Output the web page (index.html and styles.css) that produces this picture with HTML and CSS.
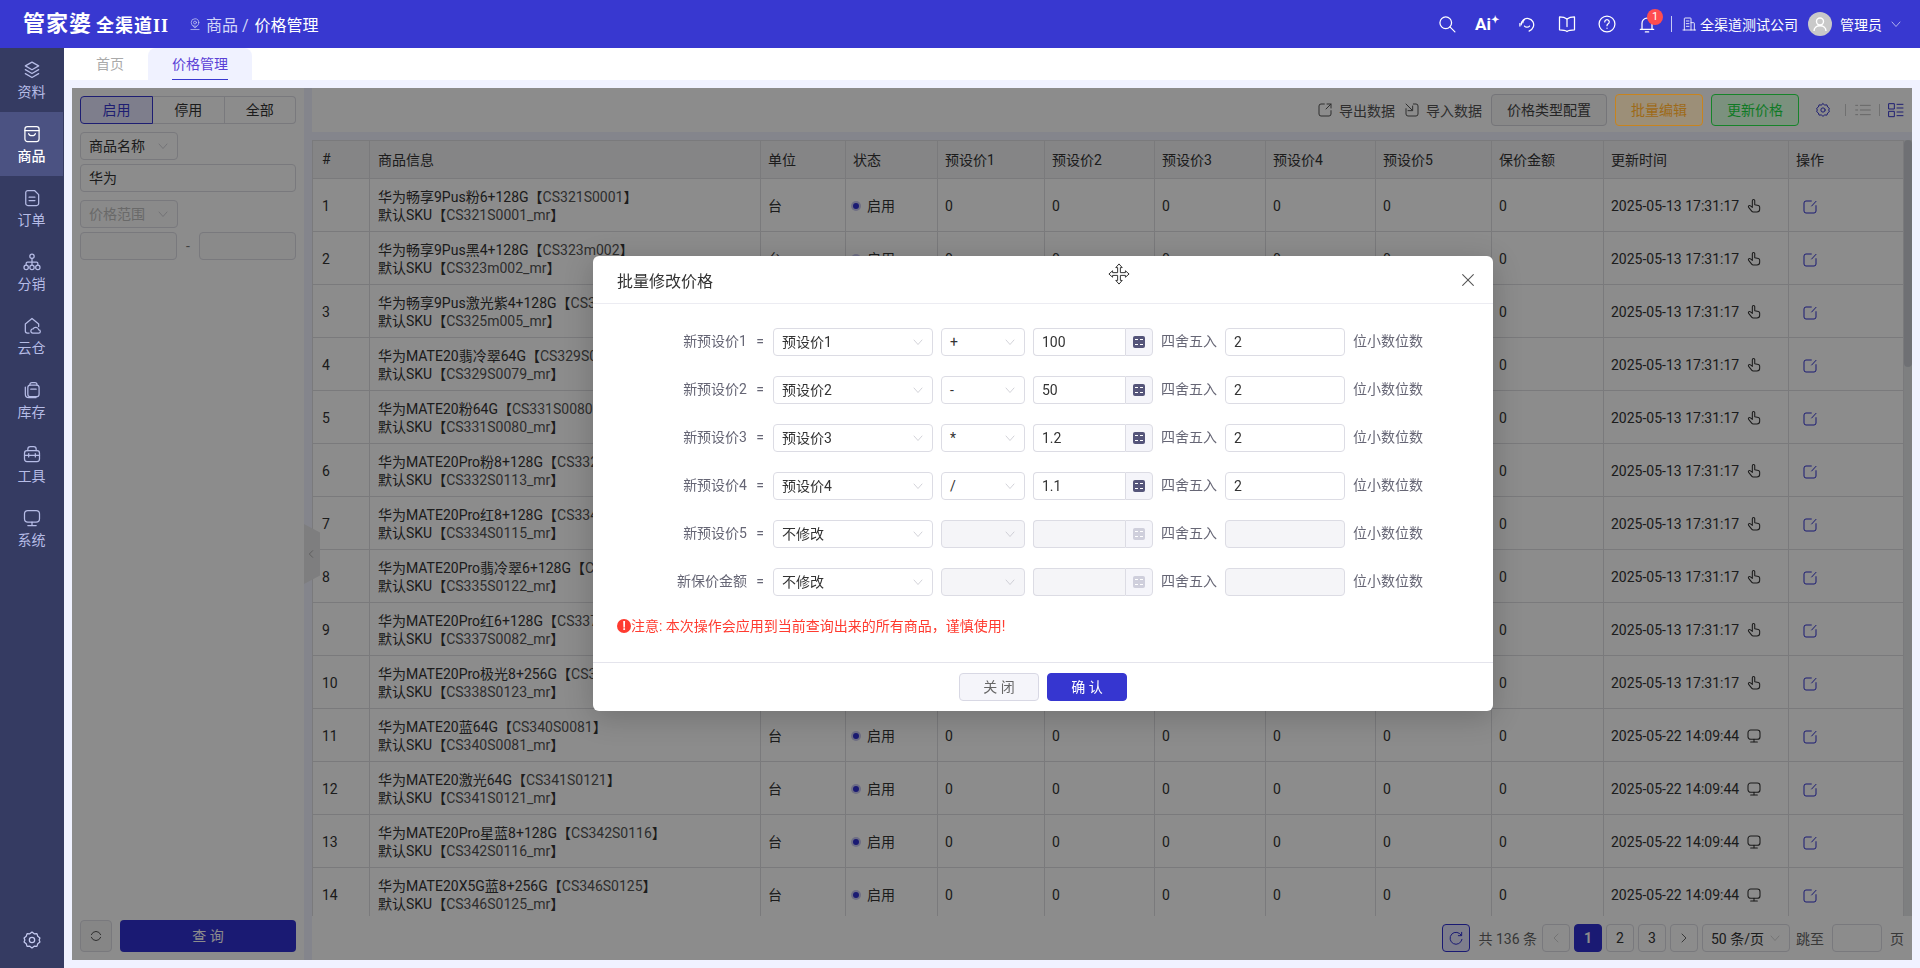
FILE: index.html
```html
<!DOCTYPE html>
<html lang="zh-CN">

<head>
    <meta charset="UTF-8">
    <title>价格管理</title>
    <link rel="stylesheet" href="styles.css">
</head>

<body>
    <svg class="sprite" xmlns="http://www.w3.org/2000/svg">
        <symbol id="i-layers" viewBox="0 0 24 24"><path d="M12 2.500l8 4.600-8 4.600-8-4.600z"/><path d="M4 11.600l8 4.600 8-4.600"/><path d="M4 16.400l8 4.600 8-4.600"/></symbol>
        <symbol id="i-shop" viewBox="0 0 24 24"><rect x="3.500" y="3" width="17" height="18" rx="3"/><path d="M3.500 8h17"/><path d="M8 11.500c.8 3.400 7.200 3.400 8 0"/></symbol>
        <symbol id="i-doc" viewBox="0 0 24 24"><path d="M7 3h8l5 5v10.500a2.500 2.500 0 0 1-2.500 2.500h-10.500a2.500 2.500 0 0 1-2.500-2.500v-13a2.500 2.500 0 0 1 2.500-2.500z"/><path d="M8.500 11h7"/><path d="M8.500 15h7"/></symbol>
        <symbol id="i-org" viewBox="0 0 24 24"><circle cx="12" cy="5" r="2.600"/><circle cx="5" cy="18.500" r="2.600"/><circle cx="12" cy="18.500" r="2.600"/><circle cx="19" cy="18.500" r="2.600"/><path d="M12 7.600v8.300"/><path d="M5 15.900v-2.400a1.500 1.500 0 0 1 1.500-1.500h11a1.500 1.500 0 0 1 1.500 1.500v2.400"/></symbol>
        <symbol id="i-cloud" viewBox="0 0 24 24"><path d="M8.500 20.500h-2a2.500 2.500 0 0 1-2.500-2.500v-8.500l8-6.500 8 6.500v3"/><path d="M13 20.500a2.500 2.500 0 0 1 .3-5 3.600 3.600 0 0 1 6.700 1 2 2 0 0 1 0 4z"/></symbol>
        <symbol id="i-jar" viewBox="0 0 24 24"><rect x="7" y="6" width="13.500" height="14" rx="3"/><path d="M4 8.500v8.500a4 4 0 0 0 4 4h9"/><path d="M10.500 11h6.500"/><path d="M9.500 6v-.5a2.500 2.500 0 0 1 2.500-2.500h3.500a2.500 2.500 0 0 1 2.500 2.500v.5"/></symbol>
        <symbol id="i-box" viewBox="0 0 24 24"><rect x="3" y="8" width="18" height="13" rx="3"/><path d="M7 8v-2a3 3 0 0 1 3-3h4a3 3 0 0 1 3 3v2"/><path d="M3 13.500h18"/><path d="M8 11.500v4"/><path d="M16 11.500v4"/></symbol>
        <symbol id="i-monitor" viewBox="0 0 24 24"><rect x="3" y="3" width="18" height="14" rx="4"/><path d="M12 17v3.500"/><path d="M7 21h10"/></symbol>
        <symbol id="i-gear" viewBox="0 0 24 24"><path d="M12 2.500l2.600 2.100 3.300-.3 1 3.200 2.600 2-.9 2.500.9 2.500-2.600 2-1 3.200-3.300-.3-2.600 2.100-2.600-2.100-3.300.3-1-3.200-2.600-2 .9-2.500-.9-2.500 2.600-2 1-3.200 3.300.3z"/><circle cx="12" cy="12" r="3.200"/></symbol>
        <symbol id="i-search" viewBox="0 0 24 24"><circle cx="10.500" cy="10.500" r="7"/><path d="M15.500 15.500l6 6"/></symbol>
        <symbol id="i-headset" viewBox="0 0 24 24"><path d="M5 13a7.500 7.500 0 1 1 14.500 2.500c-.8 2-2.500 4-5 5"/><path d="M3.500 11.500v3"/><path d="M9 14.500c1.500 1.700 4.500 1.700 6 0"/><path d="M9 6.500c-1.500 1-2 2.500-2 4"/></symbol>
        <symbol id="i-book" viewBox="0 0 24 24"><path d="M12 6c-2-1.600-5-2.500-9-2.500v15.500c4 0 7 .5 9 2 2-1.500 5-2 9-2v-15.500c-4 0-7 .9-9 2.500z"/><path d="M12 6v9"/></symbol>
        <symbol id="i-help" viewBox="0 0 24 24"><circle cx="12" cy="12" r="9.500"/><path d="M9.300 9.500a2.700 2.700 0 1 1 4.100 2.300c-.9.6-1.400 1.100-1.400 2.200"/><path d="M12 17v.2"/></symbol>
        <symbol id="i-bell" viewBox="0 0 24 24"><path d="M6 18.500v-7.500a6 6 0 0 1 12 0v7.500"/><path d="M4 18.500h16"/><path d="M10 21.500h4"/></symbol>
        <symbol id="i-building" viewBox="0 0 24 24"><path d="M5 21v-17a1 1 0 0 1 1-1h8a1 1 0 0 1 1 1v17"/><path d="M15 10h4a1 1 0 0 1 1 1v10"/><path d="M3 21h19"/><path d="M8 7.500h4"/><path d="M8 11.500h4"/><path d="M8 15.500h4"/></symbol>
        <symbol id="i-pin" viewBox="0 0 24 24"><circle cx="12" cy="9.500" r="6.500"/><circle cx="12" cy="9.500" r="2.500"/><path d="M9 16l3 3 3-3"/><path d="M5 21.500h14"/></symbol>
        <symbol id="i-export" viewBox="0 0 24 24"><path d="M11 3h-5a3 3 0 0 0-3 3v12a3 3 0 0 0 3 3h12a3 3 0 0 0 3-3v-5"/><path d="M15 3h6v6"/><path d="M21 3l-7.500 7.500"/></symbol>
        <symbol id="i-import" viewBox="0 0 24 24"><path d="M3 10v8a3 3 0 0 0 3 3h12a3 3 0 0 0 3-3v-12a3 3 0 0 0-3-3h-4"/><path d="M3 3l9 9"/><path d="M13 6v7h-7"/></symbol>
        <symbol id="i-edit" viewBox="0 0 24 24"><path d="M14 3h-8a3 3 0 0 0-3 3v12a3 3 0 0 0 3 3h12a3 3 0 0 0 3-3v-8"/><path d="M21 3.500l-6.500 7"/></symbol>
        <symbol id="i-hand" viewBox="0 0 24 24"><path d="M9.500 14v-10a1.800 1.800 0 0 1 3.600 0v6l5.400 1.200c1.200.3 2 1.200 2 2.400v3.400a4 4 0 0 1-4 4h-5.500a3 3 0 0 1-2.500-1.300l-4.500-5.700c-.7-1-.4-2 .4-2.500.8-.5 1.700-.3 2.300.4z"/></symbol>
        <symbol id="i-list" viewBox="0 0 24 24"><path d="M8 5h15"/><path d="M8 12h15"/><path d="M8 19h15"/><path d="M1 5h3"/><path d="M1 12h3"/><path d="M1 19h3"/></symbol>
        <symbol id="i-grid" viewBox="0 0 24 24"><rect x="1.500" y="2.500" width="8" height="8"/><rect x="1.500" y="14" width="8" height="8"/><path d="M13.500 3.500h9"/><path d="M13.500 9h9"/><path d="M13.500 15h9"/><path d="M13.500 20.500h9"/></symbol>
        <symbol id="i-down" viewBox="0 0 24 24"><path d="M4 8l8 9 8-9"/></symbol>
        <symbol id="i-left" viewBox="0 0 24 24"><path d="M16 4l-8 8 8 8"/></symbol>
        <symbol id="i-right" viewBox="0 0 24 24"><path d="M8 4l8 8-8 8"/></symbol>
        <symbol id="i-close" viewBox="0 0 24 24"><path d="M4 4l16 16"/><path d="M20 4l-16 16"/></symbol>
        <symbol id="i-refresh" viewBox="0 0 24 24"><path d="M20 8a9 9 0 1 0 1 6"/><path d="M20.500 3.500v5h-5"/></symbol>
        <symbol id="i-sync" viewBox="0 0 24 24"><path d="M5 10a7.500 7.500 0 0 1 14 0"/><path d="M19 14a7.500 7.500 0 0 1-14 0"/></symbol>
    </svg>

    <header class="topbar">
        <div class="logo"><span class="logo-main">管家婆</span><span class="logo-sub">全渠道<i>II</i></span></div>
        <div class="crumb">
            <svg class="ico crumb-ico"><use href="#i-pin"/></svg>
            <span class="crumb-parent">商品 /</span>
            <span class="crumb-current">价格管理</span>
        </div>
        <div class="top-actions">
            <span class="top-btn"><svg class="ico"><use href="#i-search"/></svg></span>
            <span class="top-btn ai">Ai<b>✦</b></span>
            <span class="top-btn"><svg class="ico"><use href="#i-headset"/></svg></span>
            <span class="top-btn"><svg class="ico"><use href="#i-book"/></svg></span>
            <span class="top-btn"><svg class="ico"><use href="#i-help"/></svg></span>
            <span class="top-btn bell"><svg class="ico"><use href="#i-bell"/></svg><em class="badge">1</em></span>
            <span class="top-sep"></span>
            <svg class="ico company-ico"><use href="#i-building"/></svg>
            <span class="company">全渠道测试公司</span>
            <span class="avatar"><svg viewBox="0 0 24 24"><circle cx="12" cy="9.500" r="3.500"/><path d="M6 19c0-7 12-7 12 0"/></svg></span>
            <span class="user">管理员</span>
            <svg class="ico user-down"><use href="#i-down"/></svg>
        </div>
    </header>

    <div class="shell">
        <nav class="sidenav">
            <a class="nav-item"><svg class="ico"><use href="#i-layers"/></svg>资料</a>
            <a class="nav-item active"><svg class="ico"><use href="#i-shop"/></svg>商品</a>
            <a class="nav-item"><svg class="ico"><use href="#i-doc"/></svg>订单</a>
            <a class="nav-item"><svg class="ico"><use href="#i-org"/></svg>分销</a>
            <a class="nav-item"><svg class="ico"><use href="#i-cloud"/></svg>云仓</a>
            <a class="nav-item"><svg class="ico"><use href="#i-jar"/></svg>库存</a>
            <a class="nav-item"><svg class="ico"><use href="#i-box"/></svg>工具</a>
            <a class="nav-item"><svg class="ico"><use href="#i-monitor"/></svg>系统</a>
            <svg class="ico nav-gear"><use href="#i-gear"/></svg>
        </nav>

        <main class="main">
            <div class="tabs">
                <span class="tab">首页</span>
                <span class="tab active"><span>价格管理</span></span>
            </div>

            <div class="content">
                <aside class="filter">
                    <div class="seg">
                        <span class="seg-item active">启用</span>
                        <span class="seg-item">停用</span>
                        <span class="seg-item">全部</span>
                    </div>
                    <div class="field sel narrow">商品名称<svg class="ico chev"><use href="#i-down"/></svg></div>
                    <div class="field">华为</div>
                    <div class="field sel narrow disabled">价格范围<svg class="ico chev"><use href="#i-down"/></svg></div>
                    <div class="range">
                        <div class="field disabled"></div>
                        <span>-</span>
                        <div class="field disabled"></div>
                    </div>
                    <div class="filter-foot">
                        <span class="sync"><svg class="ico"><use href="#i-sync"/></svg></span>
                        <span class="query">查 询</span>
                    </div>
                </aside>

                <section class="right">
                    <div class="toolbar">
                        <span class="tool-link"><svg class="ico"><use href="#i-export"/></svg>导出数据</span>
                        <span class="tool-link"><svg class="ico"><use href="#i-import"/></svg>导入数据</span>
                        <span class="btn">价格类型配置</span>
                        <span class="btn orange">批量编辑</span>
                        <span class="btn green">更新价格</span>
                        <svg class="ico tool-gear"><use href="#i-gear"/></svg>
                        <span class="tool-sep"></span>
                        <svg class="ico tool-list"><use href="#i-list"/></svg>
                        <span class="tool-sep"></span>
                        <svg class="ico tool-grid"><use href="#i-grid"/></svg>
                    </div>

                    <div class="grid-panel">
                        <div class="grid-body">
                            <div class="grid-scroll">
                                <table class="grid">
                                    <colgroup>
                                        <col class="c-no"><col class="c-info"><col class="c-unit"><col class="c-state">
                                        <col class="c-p1"><col class="c-p2"><col class="c-p3"><col class="c-p4"><col class="c-p5">
                                        <col class="c-keep"><col class="c-time"><col class="c-op">
                                    </colgroup>
                                    <thead>
                                        <tr><th>#</th><th>商品信息</th><th>单位</th><th>状态</th><th>预设价1</th><th>预设价2</th><th>预设价3</th><th>预设价4</th><th>预设价5</th><th>保价金额</th><th>更新时间</th><th>操作</th></tr>
                                    </thead>
                                    <tbody>
                                        <tr><td>1</td><td>华为畅享9Pus粉6+128G【<i>CS321S0001</i>】<br>默认SKU【<i>CS321S0001_mr</i>】</td><td>台</td><td><span class="dot"></span>启用</td><td>0</td><td>0</td><td>0</td><td>0</td><td>0</td><td>0</td><td>2025-05-13 17:31:17<svg class="ico src"><use href="#i-hand"/></svg></td><td><svg class="ico edit"><use href="#i-edit"/></svg></td></tr>
                                        <tr><td>2</td><td>华为畅享9Pus黑4+128G【<i>CS323m002</i>】<br>默认SKU【<i>CS323m002_mr</i>】</td><td>台</td><td><span class="dot"></span>启用</td><td>0</td><td>0</td><td>0</td><td>0</td><td>0</td><td>0</td><td>2025-05-13 17:31:17<svg class="ico src"><use href="#i-hand"/></svg></td><td><svg class="ico edit"><use href="#i-edit"/></svg></td></tr>
                                        <tr><td>3</td><td>华为畅享9Pus激光紫4+128G【<i>CS325m005</i>】<br>默认SKU【<i>CS325m005_mr</i>】</td><td>台</td><td><span class="dot"></span>启用</td><td>0</td><td>0</td><td>0</td><td>0</td><td>0</td><td>0</td><td>2025-05-13 17:31:17<svg class="ico src"><use href="#i-hand"/></svg></td><td><svg class="ico edit"><use href="#i-edit"/></svg></td></tr>
                                        <tr><td>4</td><td>华为MATE20翡冷翠64G【<i>CS329S0079</i>】<br>默认SKU【<i>CS329S0079_mr</i>】</td><td>台</td><td><span class="dot"></span>启用</td><td>0</td><td>0</td><td>0</td><td>0</td><td>0</td><td>0</td><td>2025-05-13 17:31:17<svg class="ico src"><use href="#i-hand"/></svg></td><td><svg class="ico edit"><use href="#i-edit"/></svg></td></tr>
                                        <tr><td>5</td><td>华为MATE20粉64G【<i>CS331S0080</i>】<br>默认SKU【<i>CS331S0080_mr</i>】</td><td>台</td><td><span class="dot"></span>启用</td><td>0</td><td>0</td><td>0</td><td>0</td><td>0</td><td>0</td><td>2025-05-13 17:31:17<svg class="ico src"><use href="#i-hand"/></svg></td><td><svg class="ico edit"><use href="#i-edit"/></svg></td></tr>
                                        <tr><td>6</td><td>华为MATE20Pro粉8+128G【<i>CS332S0113</i>】<br>默认SKU【<i>CS332S0113_mr</i>】</td><td>台</td><td><span class="dot"></span>启用</td><td>0</td><td>0</td><td>0</td><td>0</td><td>0</td><td>0</td><td>2025-05-13 17:31:17<svg class="ico src"><use href="#i-hand"/></svg></td><td><svg class="ico edit"><use href="#i-edit"/></svg></td></tr>
                                        <tr><td>7</td><td>华为MATE20Pro红8+128G【<i>CS334S0115</i>】<br>默认SKU【<i>CS334S0115_mr</i>】</td><td>台</td><td><span class="dot"></span>启用</td><td>0</td><td>0</td><td>0</td><td>0</td><td>0</td><td>0</td><td>2025-05-13 17:31:17<svg class="ico src"><use href="#i-hand"/></svg></td><td><svg class="ico edit"><use href="#i-edit"/></svg></td></tr>
                                        <tr><td>8</td><td>华为MATE20Pro翡冷翠6+128G【<i>CS335S0122</i>】<br>默认SKU【<i>CS335S0122_mr</i>】</td><td>台</td><td><span class="dot"></span>启用</td><td>0</td><td>0</td><td>0</td><td>0</td><td>0</td><td>0</td><td>2025-05-13 17:31:17<svg class="ico src"><use href="#i-hand"/></svg></td><td><svg class="ico edit"><use href="#i-edit"/></svg></td></tr>
                                        <tr><td>9</td><td>华为MATE20Pro红6+128G【<i>CS337S0082</i>】<br>默认SKU【<i>CS337S0082_mr</i>】</td><td>台</td><td><span class="dot"></span>启用</td><td>0</td><td>0</td><td>0</td><td>0</td><td>0</td><td>0</td><td>2025-05-13 17:31:17<svg class="ico src"><use href="#i-hand"/></svg></td><td><svg class="ico edit"><use href="#i-edit"/></svg></td></tr>
                                        <tr><td>10</td><td>华为MATE20Pro极光8+256G【<i>CS338S0123</i>】<br>默认SKU【<i>CS338S0123_mr</i>】</td><td>台</td><td><span class="dot"></span>启用</td><td>0</td><td>0</td><td>0</td><td>0</td><td>0</td><td>0</td><td>2025-05-13 17:31:17<svg class="ico src"><use href="#i-hand"/></svg></td><td><svg class="ico edit"><use href="#i-edit"/></svg></td></tr>
                                        <tr><td>11</td><td>华为MATE20蓝64G【<i>CS340S0081</i>】<br>默认SKU【<i>CS340S0081_mr</i>】</td><td>台</td><td><span class="dot"></span>启用</td><td>0</td><td>0</td><td>0</td><td>0</td><td>0</td><td>0</td><td>2025-05-22 14:09:44<svg class="ico src"><use href="#i-monitor"/></svg></td><td><svg class="ico edit"><use href="#i-edit"/></svg></td></tr>
                                        <tr><td>12</td><td>华为MATE20激光64G【<i>CS341S0121</i>】<br>默认SKU【<i>CS341S0121_mr</i>】</td><td>台</td><td><span class="dot"></span>启用</td><td>0</td><td>0</td><td>0</td><td>0</td><td>0</td><td>0</td><td>2025-05-22 14:09:44<svg class="ico src"><use href="#i-monitor"/></svg></td><td><svg class="ico edit"><use href="#i-edit"/></svg></td></tr>
                                        <tr><td>13</td><td>华为MATE20Pro星蓝8+128G【<i>CS342S0116</i>】<br>默认SKU【<i>CS342S0116_mr</i>】</td><td>台</td><td><span class="dot"></span>启用</td><td>0</td><td>0</td><td>0</td><td>0</td><td>0</td><td>0</td><td>2025-05-22 14:09:44<svg class="ico src"><use href="#i-monitor"/></svg></td><td><svg class="ico edit"><use href="#i-edit"/></svg></td></tr>
                                        <tr><td>14</td><td>华为MATE20X5G蓝8+256G【<i>CS346S0125</i>】<br>默认SKU【<i>CS346S0125_mr</i>】</td><td>台</td><td><span class="dot"></span>启用</td><td>0</td><td>0</td><td>0</td><td>0</td><td>0</td><td>0</td><td>2025-05-22 14:09:44<svg class="ico src"><use href="#i-monitor"/></svg></td><td><svg class="ico edit"><use href="#i-edit"/></svg></td></tr>
                                    </tbody>
                                </table>
                            </div>
                            <div class="scrollbar"><span></span></div>
                        </div>

                        <div class="pager">
                            <span class="pg-refresh"><svg class="ico"><use href="#i-refresh"/></svg></span>
                            <span class="pg-total">共 136 条</span>
                            <span class="pg-btn off"><svg class="ico"><use href="#i-left"/></svg></span>
                            <span class="pg-btn current">1</span>
                            <span class="pg-btn">2</span>
                            <span class="pg-btn">3</span>
                            <span class="pg-btn"><svg class="ico"><use href="#i-right"/></svg></span>
                            <span class="pg-size">50 条/页<svg class="ico"><use href="#i-down"/></svg></span>
                            <span class="pg-label jump">跳至</span>
                            <span class="pg-input"></span>
                            <span class="pg-label last">页</span>
                        </div>
                    </div>
                </section>

                <div class="collapse"><svg class="ico"><use href="#i-left"/></svg></div>
                <div class="mask"></div>
            </div>
        </main>
    </div>

    <div class="modal">
        <div class="modal-head">
            <span>批量修改价格</span>
            <svg class="ico modal-close"><use href="#i-close"/></svg>
        </div>
        <div class="modal-body">
            <div class="row">
                <label class="row-label">新预设价1</label><span class="eq">=</span>
                <div class="field sel base">预设价1<svg class="ico chev"><use href="#i-down"/></svg></div>
                <div class="field sel op">+<svg class="ico chev"><use href="#i-down"/></svg></div>
                <div class="calc"><div class="field">100</div><span class="calc-btn"><span class="calc-ico"></span></span></div>
                <span class="round">四舍五入</span>
                <div class="field digits">2</div>
                <span class="unit">位小数位数</span>
            </div>
            <div class="row">
                <label class="row-label">新预设价2</label><span class="eq">=</span>
                <div class="field sel base">预设价2<svg class="ico chev"><use href="#i-down"/></svg></div>
                <div class="field sel op">-<svg class="ico chev"><use href="#i-down"/></svg></div>
                <div class="calc"><div class="field">50</div><span class="calc-btn"><span class="calc-ico"></span></span></div>
                <span class="round">四舍五入</span>
                <div class="field digits">2</div>
                <span class="unit">位小数位数</span>
            </div>
            <div class="row">
                <label class="row-label">新预设价3</label><span class="eq">=</span>
                <div class="field sel base">预设价3<svg class="ico chev"><use href="#i-down"/></svg></div>
                <div class="field sel op">*<svg class="ico chev"><use href="#i-down"/></svg></div>
                <div class="calc"><div class="field">1.2</div><span class="calc-btn"><span class="calc-ico"></span></span></div>
                <span class="round">四舍五入</span>
                <div class="field digits">2</div>
                <span class="unit">位小数位数</span>
            </div>
            <div class="row">
                <label class="row-label">新预设价4</label><span class="eq">=</span>
                <div class="field sel base">预设价4<svg class="ico chev"><use href="#i-down"/></svg></div>
                <div class="field sel op">/<svg class="ico chev"><use href="#i-down"/></svg></div>
                <div class="calc"><div class="field">1.1</div><span class="calc-btn"><span class="calc-ico"></span></span></div>
                <span class="round">四舍五入</span>
                <div class="field digits">2</div>
                <span class="unit">位小数位数</span>
            </div>
            <div class="row">
                <label class="row-label">新预设价5</label><span class="eq">=</span>
                <div class="field sel base">不修改<svg class="ico chev"><use href="#i-down"/></svg></div>
                <div class="field sel op locked"><svg class="ico chev"><use href="#i-down"/></svg></div>
                <div class="calc locked"><div class="field"></div><span class="calc-btn"><span class="calc-ico"></span></span></div>
                <span class="round">四舍五入</span>
                <div class="field digits locked"></div>
                <span class="unit">位小数位数</span>
            </div>
            <div class="row">
                <label class="row-label">新保价金额</label><span class="eq">=</span>
                <div class="field sel base">不修改<svg class="ico chev"><use href="#i-down"/></svg></div>
                <div class="field sel op locked"><svg class="ico chev"><use href="#i-down"/></svg></div>
                <div class="calc locked"><div class="field"></div><span class="calc-btn"><span class="calc-ico"></span></span></div>
                <span class="round">四舍五入</span>
                <div class="field digits locked"></div>
                <span class="unit">位小数位数</span>
            </div>
            <p class="warn"><span class="warn-ico">!</span>注意: 本次操作会应用到当前查询出来的所有商品，谨慎使用!</p>
        </div>
        <div class="modal-foot">
            <span class="foot-btn">关 闭</span>
            <span class="foot-btn primary">确 认</span>
        </div>
        <svg class="move-cursor" viewBox="0 0 24 24"><path d="M12 1l3.500 4h-2v5.500h5.500v-2l4 3.500-4 3.500v-2h-5.500v5.500h2l-3.500 4-3.500-4h2v-5.500h-5.500v2l-4-3.500 4-3.500v2h5.500v-5.500h-2z"/></svg>
    </div>
</body>

</html>
```
FILE: styles.css
```css
* {
    box-sizing: border-box;
}

html,
body {
    height: 100%;
}

body {
    margin: 0;
    font-family: Roboto, "Noto Sans CJK SC", sans-serif;
    font-size: 14px;
    color: #333;
    background: #f0f2ff;
    overflow: hidden;
    display: flex;
    flex-direction: column;
}

.sprite {
    display: none;
}

.ico {
    width: 16px;
    height: 16px;
    fill: none;
    stroke: currentColor;
    stroke-width: 1.5;
    stroke-linecap: round;
    stroke-linejoin: round;
    flex: none;
}

/* top bar */
.topbar {
    height: 48px;
    flex: none;
    background: #3838d0;
    color: #fff;
    display: flex;
    align-items: center;
}

.logo {
    width: 188px;
    padding-left: 23px;
    font-weight: 700;
    white-space: nowrap;
    display: flex;
    align-items: center;
}

.logo-main {
    font-size: 22px;
    letter-spacing: 1px;
    margin-right: 4px;
    line-height: 28px;
}

.logo-sub {
    font-size: 18px;
    letter-spacing: 1px;
    line-height: 28px;
    margin-top: 3px;
}

.logo-sub i {
    font-family: "Liberation Serif", serif;
    font-style: normal;
}

.crumb {
    display: flex;
    align-items: center;
    font-size: 16px;
}

.crumb-ico {
    width: 14px;
    height: 14px;
    color: #c5c9f5;
    margin-right: 4px;
    stroke-width: 1.3;
}

.crumb-parent {
    color: #d3d6f8;
    margin-right: 6px;
}

.top-actions {
    margin-left: auto;
    padding-right: 18px;
    display: flex;
    align-items: center;
}

.top-btn {
    width: 40px;
    height: 24px;
    display: flex;
    align-items: center;
    justify-content: center;
    position: relative;
}

.top-btn .ico {
    width: 20px;
    height: 20px;
}

.ai {
    font-weight: 700;
    font-size: 17px;
}

.ai b {
    font-size: 10px;
    margin-top: -9px;
}

.badge {
    position: absolute;
    left: 20px;
    top: -3px;
    width: 16px;
    height: 16px;
    border-radius: 50%;
    background: #ff4d4f;
    font-size: 11px;
    font-style: normal;
    line-height: 16px;
    text-align: center;
}

.top-sep {
    width: 1px;
    height: 16px;
    background: #c5c9f5;
    margin: 0 7px 0 4px;
}

.company-ico {
    margin: 0 3px 0 2px;
    stroke-width: 1.3;
}

.company {
    white-space: nowrap;
}

.avatar {
    width: 24px;
    height: 24px;
    border-radius: 50%;
    background: #c9c9c9;
    margin: 0 8px 0 10px;
}

.avatar svg {
    display: block;
    fill: none;
    stroke: #fff;
    stroke-width: 1.4;
}

.user-down {
    width: 12px;
    height: 12px;
    margin-left: 8px;
    stroke-width: 1.2;
}

/* side nav */
.shell {
    flex: 1;
    display: flex;
    min-height: 0;
}

.sidenav {
    width: 64px;
    flex: none;
    background: #353b62;
    display: flex;
    flex-direction: column;
}

.nav-item {
    width: 63px;
    height: 64px;
    padding-top: 12px;
    display: flex;
    flex-direction: column;
    align-items: center;
    gap: 2px;
    color: #b6bce6;
    line-height: 20px;
}

.nav-item .ico {
    width: 20px;
    height: 20px;
}

.nav-item.active {
    background: #4b5282;
    color: #fff;
    font-weight: 500;
}

.nav-gear {
    margin: auto auto 18px;
    width: 20px;
    height: 20px;
    color: #c5caf0;
}

/* main */
.main {
    flex: 1;
    min-width: 0;
    display: flex;
    flex-direction: column;
}

.tabs {
    height: 32px;
    flex: none;
    background: #fff;
    padding-left: 8px;
    display: flex;
    margin-bottom: 8px;
}

.tab {
    padding: 0 24px;
    line-height: 32px;
    color: #aaa;
}

.tab.active {
    background: #f0f2ff;
    border-radius: 8px 8px 0 0;
    color: #5a3fd6;
}

.tab.active span {
    display: block;
    height: 32px;
    border-bottom: 1px solid #3838d0;
}

.content {
    flex: 1;
    min-height: 0;
    position: relative;
    margin: 0 8px 8px;
    display: flex;
    gap: 8px;
}

.mask {
    position: absolute;
    inset: 0;
    z-index: 10;
    background: rgba(0, 0, 0, 0.45);
}

/* filter */
.filter {
    width: 232px;
    flex: none;
    background: #fff;
    padding: 8px;
    display: flex;
    flex-direction: column;
    gap: 4px;
}

.seg {
    display: flex;
    height: 28px;
}

.seg-item {
    flex: 1;
    border: 1px solid #dcdce4;
    border-left: 0;
    text-align: center;
    line-height: 26px;
}

.seg-item:last-child {
    border-radius: 0 4px 4px 0;
}

.seg-item.active {
    flex: none;
    width: 73px;
    border: 1px solid #3838d0;
    border-radius: 4px 0 0 4px;
    background: #e6e6ff;
    color: #3838d0;
}

.field {
    height: 28px;
    flex: none;
    border: 1px solid #dcdce4;
    border-radius: 4px;
    padding: 0 8px;
    line-height: 26px;
    background: #fff;
    color: #333;
}

.sel {
    display: flex;
    align-items: center;
    white-space: nowrap;
}

.chev {
    width: 12px;
    height: 12px;
    margin-left: auto;
    color: #b5b5c0;
    stroke-width: 1.2;
}

.narrow {
    width: 98px;
}

.filter .sel.narrow {
    margin-top: 4px;
}

.filter .field.disabled {
    background: #fbfbfb;
    color: #c0c0c0;
}

.range {
    display: flex;
    align-items: center;
    gap: 9px;
    color: #777;
}

.range .field {
    flex: 1;
}

.filter-foot {
    margin-top: auto;
    display: flex;
    gap: 8px;
}

.sync {
    width: 32px;
    height: 32px;
    border: 1px solid #dcdce4;
    border-radius: 4px;
    background: #f5f5f5;
    color: #555;
    display: flex;
    align-items: center;
    justify-content: center;
}

.query {
    flex: 1;
    height: 32px;
    border-radius: 4px;
    background: #3030d2;
    color: #fff;
    text-align: center;
    line-height: 32px;
}

/* right side */
.right {
    flex: 1;
    min-width: 0;
    display: flex;
    flex-direction: column;
    gap: 8px;
}

.toolbar {
    height: 44px;
    flex: none;
    background: #fff;
    display: flex;
    align-items: center;
    justify-content: flex-end;
    padding-right: 8px;
}

.tool-link {
    display: flex;
    align-items: center;
    gap: 6px;
    margin-right: 9px;
    color: #555;
}

.btn {
    height: 32px;
    padding: 0 15px;
    border: 1px solid #d5d5dc;
    border-radius: 4px;
    background: #f7f7f7;
    line-height: 30px;
    margin-right: 8px;
    color: #444;
}

.btn.orange {
    position: relative;
    z-index: 11;
    border-color: #c8841e;
    background: #9c8f78;
    color: #9e6a18;
}

.btn.green {
    position: relative;
    z-index: 11;
    border-color: #16842a;
    background: #7b917e;
    color: #0f7a25;
}

.tool-gear {
    color: #3838d0;
    margin: 0 14px 0 8px;
}

.tool-sep {
    width: 1px;
    height: 12px;
    background: #ccc;
}

.tool-list {
    color: #bbb;
    margin: 0 8px 0 9px;
}

.tool-grid {
    color: #3838d0;
    margin-left: 8px;
}

.grid-panel {
    flex: 1;
    min-height: 0;
    background: #fff;
    display: flex;
    flex-direction: column;
}

.grid-body {
    flex: 1;
    min-height: 0;
    display: flex;
}

.grid-scroll {
    flex: 1;
    min-width: 0;
    overflow: hidden;
}

.scrollbar {
    width: 8px;
    flex: none;
    background: #e6e7ea;
}

.scrollbar span {
    display: block;
    height: 227px;
    border-radius: 4px;
    background: #cacdd4;
}

.grid {
    width: 1592px;
    table-layout: fixed;
    border-collapse: separate;
    border-spacing: 0;
}

.c-no { width: 58px; }
.c-info { width: 391px; }
.c-unit { width: 85px; }
.c-state { width: 92px; }
.c-p1 { width: 107px; }
.c-p2 { width: 110px; }
.c-p3 { width: 111px; }
.c-p4 { width: 110px; }
.c-p5 { width: 116px; }
.c-keep { width: 112px; }
.c-time { width: 185px; }
.c-op { width: 115px; }

.grid th,
.grid td {
    padding: 0 8px 0 7px;
    border-right: 1px solid #dedee2;
    border-bottom: 1px solid #dedee2;
    text-align: left;
    white-space: nowrap;
    overflow: hidden;
    font-weight: 400;
}

.grid th {
    height: 39px;
    padding-bottom: 2px;
    background: #f2f2f4;
    border-top: 1px solid #dedee2;
}

.grid td {
    height: 53px;
    padding-top: 1px;
    line-height: 18px;
}

.grid th:first-child,
.grid td:first-child {
    padding-left: 9px;
    border-left: 1px solid #dedee2;
}

.grid th:nth-child(2),
.grid td:nth-child(2) {
    padding-left: 8px;
}

.grid i {
    font-style: normal;
    color: #555;
}

.dot {
    display: inline-block;
    width: 6px;
    height: 6px;
    border-radius: 50%;
    background: #3030d2;
    box-shadow: 0 0 0 2px #c8c8f0;
    margin: 0 8px 1px 0;
    vertical-align: middle;
}

.src {
    margin-left: 7px;
    vertical-align: -3px;
    stroke-width: 1.6;
}

.edit {
    margin-left: 6px;
    vertical-align: middle;
    color: #3030d2;
}

.pager {
    height: 44px;
    flex: none;
    display: flex;
    align-items: center;
    justify-content: flex-end;
    padding: 0 8px;
    gap: 4px;
}

.pg-refresh {
    width: 28px;
    height: 28px;
    border: 1px solid #3030d2;
    border-radius: 4px;
    background: #e6e6ff;
    color: #3030d2;
    display: flex;
    align-items: center;
    justify-content: center;
    margin-right: 4px;
}

.pg-total {
    color: #666;
    margin-right: 1px;
    white-space: nowrap;
}

.pg-btn {
    width: 28px;
    height: 28px;
    border: 1px solid #dcdce4;
    border-radius: 4px;
    text-align: center;
    line-height: 26px;
    display: flex;
    align-items: center;
    justify-content: center;
}

.pg-btn .ico {
    width: 12px;
    height: 12px;
}

.pg-btn.off {
    color: #c5c5c5;
}

.pg-btn.current {
    border-color: #3030d2;
    background: #3030d2;
    color: #fff;
    font-weight: 700;
}

.pg-size {
    width: 88px;
    height: 28px;
    border: 1px solid #dcdce4;
    border-radius: 4px;
    padding: 0 8px;
    display: flex;
    align-items: center;
    justify-content: space-between;
    white-space: nowrap;
}

.pg-size .ico {
    width: 12px;
    height: 12px;
    color: #bbb;
    stroke-width: 1.2;
}

.pg-label {
    color: #666;
    margin: 0 4px;
    white-space: nowrap;
}

.pg-label.jump {
    margin-left: 2px;
}

.pg-label.last {
    margin-right: 0;
}

.pg-input {
    width: 50px;
    height: 28px;
    border: 1px solid #dcdce4;
    border-radius: 4px;
}

.collapse {
    position: absolute;
    left: 232px;
    top: 436px;
    width: 16px;
    height: 60px;
    background: #e6e6e8;
    clip-path: polygon(0 0, 100% 14%, 100% 86%, 0 100%);
    color: #888;
    display: flex;
    align-items: center;
    padding-left: 2px;
}

.collapse .ico {
    width: 10px;
    height: 10px;
}

/* modal */
.modal {
    position: fixed;
    left: 593px;
    top: 256px;
    z-index: 20;
    width: 900px;
    height: 455px;
    border-radius: 6px;
    background: #fff;
    box-shadow: 0 6px 30px rgba(0, 0, 0, 0.2);
    display: flex;
    flex-direction: column;
}

.modal-head {
    height: 48px;
    flex: none;
    border-bottom: 1px solid #ececf2;
    padding: 0 24px;
    display: flex;
    align-items: center;
    justify-content: space-between;
    font-size: 16px;
    color: #333;
}

.modal-close {
    width: 16px;
    height: 16px;
    margin-right: -7px;
    color: #555;
    stroke-width: 1.6;
}

.modal-body {
    flex: 1;
    padding-top: 24px;
    display: flex;
    flex-direction: column;
    gap: 20px;
}

.row {
    display: flex;
    align-items: center;
    height: 28px;
    color: #666675;
    white-space: nowrap;
}

.row-label,
.eq,
.round,
.unit {
    height: 28px;
    line-height: 27px;
}

.row-label {
    width: 154px;
    text-align: right;
}

.eq {
    width: 26px;
    text-align: center;
}

.field.base {
    width: 160px;
    margin-right: 8px;
}

.field.op {
    width: 84px;
    margin-right: 8px;
}

.calc {
    width: 120px;
    flex: none;
    display: flex;
    margin-right: 8px;
}

.calc .field {
    flex: 1;
    border-radius: 4px 0 0 4px;
    border-right: 0;
}

.calc-btn {
    width: 28px;
    height: 28px;
    border: 1px solid #dcdce4;
    border-radius: 0 4px 4px 0;
    background: #f5f5fa;
    display: flex;
    align-items: center;
    justify-content: center;
}

.calc-ico {
    width: 12px;
    height: 12px;
    border-radius: 2px;
    background:
        linear-gradient(#fff, #fff) 2px 3px / 3px 1px no-repeat,
        linear-gradient(#fff, #fff) 7px 3px / 3px 1px no-repeat,
        linear-gradient(#fff, #fff) 2px 8px / 3px 1px no-repeat,
        linear-gradient(#fff, #fff) 7px 8px / 3px 1px no-repeat,
        #55557a;
}

.round {
    width: 64px;
}

.field.digits {
    width: 120px;
    margin-right: 8px;
}

.locked .field,
.field.locked {
    background: #f5f5f8;
}

.locked .calc-ico {
    background:
        linear-gradient(#fff, #fff) 2px 3px / 3px 1px no-repeat,
        linear-gradient(#fff, #fff) 7px 3px / 3px 1px no-repeat,
        linear-gradient(#fff, #fff) 2px 8px / 3px 1px no-repeat,
        linear-gradient(#fff, #fff) 7px 8px / 3px 1px no-repeat,
        #cfcfdc;
}

.warn {
    margin: 0 0 0 24px;
    color: #ff3b30;
    display: flex;
    align-items: center;
    line-height: 20px;
}

.warn-ico {
    width: 14px;
    height: 14px;
    border-radius: 50%;
    background: #ff3b30;
    color: #fff;
    font-size: 12px;
    font-weight: 700;
    line-height: 14px;
    text-align: center;
}

.modal-foot {
    height: 49px;
    flex: none;
    border-top: 1px solid #e4e4ec;
    padding-top: 10px;
    display: flex;
    justify-content: center;
    gap: 8px;
}

.foot-btn {
    width: 80px;
    height: 28px;
    border: 1px solid #d8d8e4;
    border-radius: 4px;
    background: #f5f5fa;
    color: #666;
    text-align: center;
    line-height: 26px;
}

.foot-btn.primary {
    border-color: #3636d0;
    background: #3636d0;
    color: #fff;
}

.move-cursor {
    position: absolute;
    left: 515px;
    top: 7px;
    width: 22px;
    height: 22px;
    fill: #fff;
    stroke: #222;
    stroke-width: 1;
}
```
